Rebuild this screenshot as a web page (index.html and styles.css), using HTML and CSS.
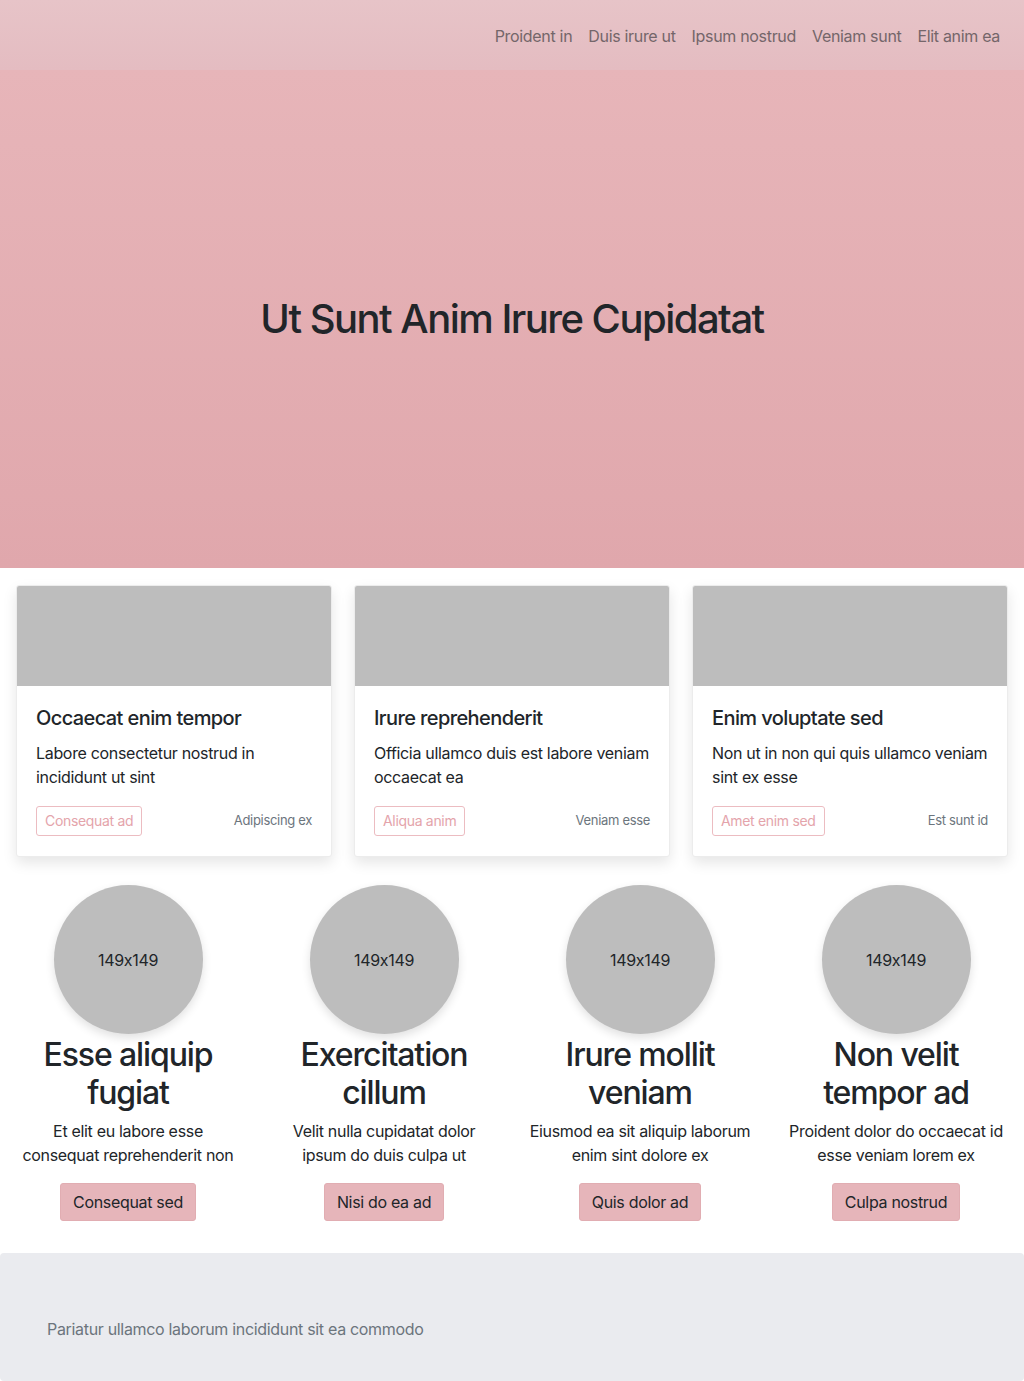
FILE: index.html
```html
<!DOCTYPE html>
<html lang="en">
<head>
    <meta charset="UTF-8">
    <meta name="viewport" content="width=device-width, initial-scale=1.0">
    <title>Ut Sunt Anim Irure Cupidatat</title>
    <link rel="stylesheet" href="styles.css">
</head>
<body>

<nav class="navbar">
    <a href="#">Proident in</a>
    <a href="#">Duis irure ut</a>
    <a href="#">Ipsum nostrud</a>
    <a href="#">Veniam sunt</a>
    <a href="#">Elit anim ea</a>
</nav>

<header class="hero">
    <h1>Ut Sunt Anim Irure Cupidatat</h1>
</header>

<section class="cards">
    <div class="card">
        <div class="card-img"></div>
        <div class="card-body">
            <h3>Occaecat enim tempor</h3>
            <p>Labore consectetur nostrud in incididunt ut sint</p>
            <div class="card-footer">
                <a href="#" class="btn-outline">Consequat ad</a>
                <small>Adipiscing ex</small>
            </div>
        </div>
    </div>
    <div class="card">
        <div class="card-img"></div>
        <div class="card-body">
            <h3>Irure reprehenderit</h3>
            <p>Officia ullamco duis est labore veniam occaecat ea</p>
            <div class="card-footer">
                <a href="#" class="btn-outline">Aliqua anim</a>
                <small>Veniam esse</small>
            </div>
        </div>
    </div>
    <div class="card">
        <div class="card-img"></div>
        <div class="card-body">
            <h3>Enim voluptate sed</h3>
            <p>Non ut in non qui quis ullamco veniam sint ex esse</p>
            <div class="card-footer">
                <a href="#" class="btn-outline">Amet enim sed</a>
                <small>Est sunt id</small>
            </div>
        </div>
    </div>
</section>

<section class="features">
    <div class="feature">
        <div class="avatar">149x149</div>
        <h2>Esse aliquip fugiat</h2>
        <p>Et elit eu labore esse consequat reprehenderit non</p>
        <a href="#" class="btn">Consequat sed</a>
    </div>
    <div class="feature">
        <div class="avatar">149x149</div>
        <h2>Exercitation cillum</h2>
        <p>Velit nulla cupidatat dolor ipsum do duis culpa ut</p>
        <a href="#" class="btn">Nisi do ea ad</a>
    </div>
    <div class="feature">
        <div class="avatar">149x149</div>
        <h2>Irure mollit veniam</h2>
        <p>Eiusmod ea sit aliquip laborum enim sint dolore ex</p>
        <a href="#" class="btn">Quis dolor ad</a>
    </div>
    <div class="feature">
        <div class="avatar">149x149</div>
        <h2>Non velit tempor ad</h2>
        <p>Proident dolor do occaecat id esse veniam lorem ex</p>
        <a href="#" class="btn">Culpa nostrud</a>
    </div>
</section>

<footer class="footer">
    <p>Pariatur ullamco laborum incididunt sit ea commodo</p>
</footer>

</body>
</html>
```

FILE: styles.css
```css
body {
    font-family: Inter, "Noto Sans", sans-serif;
    font-feature-settings: "calt" 0;
    letter-spacing: -0.02em;
    color: #212529;
    background-color: #fff;
    margin: 0;
    font-size: 16px;
    line-height: 1.5;
}

a {
    text-decoration: none;
}

.navbar {
    height: 70px;
    box-sizing: border-box;
    padding: 2px 16px 0;
    display: flex;
    justify-content: flex-end;
    align-items: center;
    background: linear-gradient(#e7c4c8, #e4bcc1);
}

.navbar a {
    color: #74666a;
    padding: 0 8px;
}

.hero {
    height: 498px;
    display: flex;
    align-items: center;
    justify-content: center;
    background: linear-gradient(#e7b5b9, #e0a7ac);
}

.hero h1 {
    margin: 0;
    font-size: 40px;
    font-weight: 500;
    line-height: 1.2;
    letter-spacing: -0.038em;
}

.cards {
    display: grid;
    grid-template-columns: repeat(3, 1fr);
    gap: 22px;
    padding: 17px 16px 0;
}

.card {
    background-color: #fff;
    border: 1px solid #ececec;
    border-radius: 3px;
    box-shadow: 0 6px 14px rgba(0, 0, 0, 0.1);
    overflow: hidden;
}

.card-img {
    height: 100px;
    background-color: #bdbdbd;
}

.card-body {
    padding: 20px 19px 20px;
}

.card-body h3 {
    margin: 0 0 11px;
    font-size: 20px;
    font-weight: 500;
    line-height: 1.2;
    letter-spacing: -0.03em;
}

.card-body p {
    margin: 0 0 17px;
}

.card-footer {
    display: flex;
    justify-content: space-between;
    align-items: center;
}

.btn-outline {
    font-size: 14px;
    line-height: 20px;
    color: #e4a4ab;
    border: 1px solid #ecbcc1;
    border-radius: 3px;
    padding: 4px 8px;
}

.card-footer small {
    font-size: 13px;
    color: #6c757d;
}

.features {
    display: grid;
    grid-template-columns: repeat(4, 1fr);
    padding-top: 28px;
}

.feature {
    text-align: center;
    padding: 0 16px;
}

.avatar {
    width: 149px;
    height: 149px;
    margin: 0 auto;
    border-radius: 50%;
    background-color: #bdbdbd;
    box-shadow: 0 4px 10px rgba(0, 0, 0, 0.12);
    display: flex;
    align-items: center;
    justify-content: center;
}

.feature h2 {
    margin: 2px 0 7px;
    font-size: 32px;
    font-weight: 500;
    line-height: 38px;
    letter-spacing: -0.035em;
}

.feature p {
    margin: 0 0 16px;
}

.btn {
    display: inline-block;
    padding: 6px 12px;
    color: #212529;
    background-color: #e6b5ba;
    border: 1px solid #e1adb2;
    border-radius: 3px;
}

.footer {
    margin-top: 32px;
    background-color: #eaebef;
    border-radius: 4px;
    padding: 64px 47px 40px;
    color: #6c757d;
}

.footer p {
    margin: 0;
}
```
